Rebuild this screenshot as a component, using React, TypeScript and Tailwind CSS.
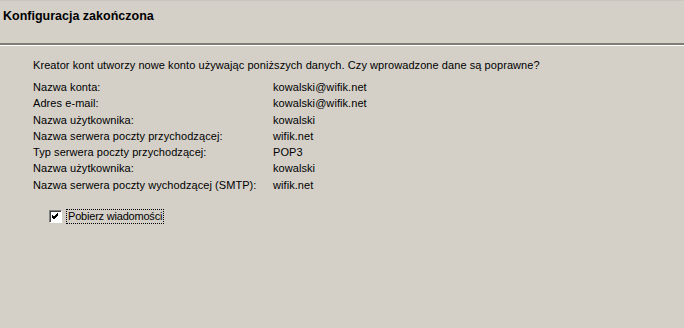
const rows: [string, string][] = [
  ["Nazwa konta:", "kowalski@wifik.net"],
  ["Adres e-mail:", "kowalski@wifik.net"],
  ["Nazwa użytkownika:", "kowalski"],
  ["Nazwa serwera poczty przychodzącej:", "wifik.net"],
  ["Typ serwera poczty przychodzącej:", "POP3"],
  ["Nazwa użytkownika:", "kowalski"],
  ["Nazwa serwera poczty wychodzącej (SMTP):", "wifik.net"],
];

export default function App() {
  return (
    <div
      className="w-[684px] h-[328px] bg-[#d4d0c8] text-black overflow-hidden"
      style={{ fontFamily: '"Liberation Sans", Arial, sans-serif' }}
    >
      {/* Header */}
      <div className="h-[43px] border-t border-[#c8c6c0] pl-[3px] pt-[7px]">
        <div className="text-[12.5px] font-bold leading-[16px]">Konfiguracja zakończona</div>
      </div>
      <div className="h-[2px] bg-[#7f7c76]" />
      <div className="h-[1px] bg-white" />

      {/* Body */}
      <div className="pl-[33px] pt-[11px] text-[11px] leading-[16px] tracking-[0.07px]">
        <div>
          Kreator kont utworzy nowe konto używając poniższych danych. Czy wprowadzone dane są poprawne?
        </div>
        <div className="mt-[6px] grid grid-cols-[240px_1fr] leading-[16.3px]">
          {rows.map(([k, v], i) => (
            <div key={i} className="contents">
              <div>{k}</div>
              <div>{v}</div>
            </div>
          ))}
        </div>

        <div className="mt-[16px] ml-[16px] flex items-center gap-[4px]">
          <div className="w-[13px] h-[13px] bg-white border border-t-[#808080] border-l-[#808080] border-b-white border-r-white flex items-center justify-center shadow-[inset_1px_1px_0_#404040]">
            <svg width="9" height="9" viewBox="0 0 9 9">
              <path d="M1 3 L3 5 L7 1 M1 4 L3 6 L7 2 M1 5 L3 7 L7 3" stroke="black" strokeWidth="1" fill="none" shapeRendering="crispEdges" />
            </svg>
          </div>
          <div className="border border-dotted border-black px-[1px] leading-[13px] tracking-[-0.2px]">Pobierz wiadomości</div>
        </div>
      </div>
    </div>
  );
}
